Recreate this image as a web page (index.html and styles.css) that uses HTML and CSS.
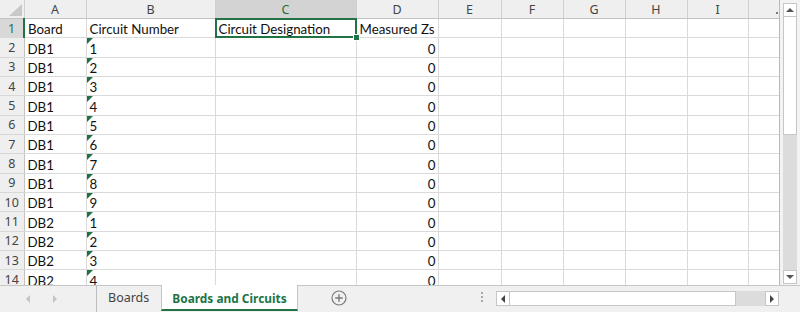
FILE: index.html
```html
<!DOCTYPE html>
<html lang="en">
<head>
  <meta charset="UTF-8">
  <title>Boards and Circuits</title>
  <link rel="stylesheet" href="styles.css">
</head>
<body>
  <div class="sheet">
    <div class="grid-wrap">
      <table class="grid">
        <colgroup>
          <col style="width:24px"><col style="width:62px"><col style="width:129px"><col style="width:141px">
          <col style="width:82px"><col style="width:63px"><col style="width:62px"><col style="width:62px">
          <col style="width:62px"><col style="width:61px"><col style="width:31px">
        </colgroup>
        <thead>
          <tr>
            <th class="corner"></th>
            <th>A</th><th>B</th><th class="col-sel">C</th><th>D</th><th>E</th>
            <th>F</th><th>G</th><th>H</th><th>I</th><th class="last"><span class="dot"></span></th>
          </tr>
        </thead>
        <tbody>
          <tr><th class="row-sel">1</th><td>Board</td><td>Circuit Number</td><td class="sel">Circuit Designation</td><td>Measured Zs</td><td></td><td></td><td></td><td></td><td></td><td></td></tr>
          <tr><th>2</th><td>DB1</td><td class="txt">1</td><td></td><td class="num">0</td><td></td><td></td><td></td><td></td><td></td><td></td></tr>
          <tr><th>3</th><td>DB1</td><td class="txt">2</td><td></td><td class="num">0</td><td></td><td></td><td></td><td></td><td></td><td></td></tr>
          <tr><th>4</th><td>DB1</td><td class="txt">3</td><td></td><td class="num">0</td><td></td><td></td><td></td><td></td><td></td><td></td></tr>
          <tr><th>5</th><td>DB1</td><td class="txt">4</td><td></td><td class="num">0</td><td></td><td></td><td></td><td></td><td></td><td></td></tr>
          <tr><th>6</th><td>DB1</td><td class="txt">5</td><td></td><td class="num">0</td><td></td><td></td><td></td><td></td><td></td><td></td></tr>
          <tr><th>7</th><td>DB1</td><td class="txt">6</td><td></td><td class="num">0</td><td></td><td></td><td></td><td></td><td></td><td></td></tr>
          <tr><th>8</th><td>DB1</td><td class="txt">7</td><td></td><td class="num">0</td><td></td><td></td><td></td><td></td><td></td><td></td></tr>
          <tr><th>9</th><td>DB1</td><td class="txt">8</td><td></td><td class="num">0</td><td></td><td></td><td></td><td></td><td></td><td></td></tr>
          <tr><th>10</th><td>DB1</td><td class="txt">9</td><td></td><td class="num">0</td><td></td><td></td><td></td><td></td><td></td><td></td></tr>
          <tr><th>11</th><td>DB2</td><td class="txt">1</td><td></td><td class="num">0</td><td></td><td></td><td></td><td></td><td></td><td></td></tr>
          <tr><th>12</th><td>DB2</td><td class="txt">2</td><td></td><td class="num">0</td><td></td><td></td><td></td><td></td><td></td><td></td></tr>
          <tr><th>13</th><td>DB2</td><td class="txt">3</td><td></td><td class="num">0</td><td></td><td></td><td></td><td></td><td></td><td></td></tr>
          <tr><th>14</th><td>DB2</td><td class="txt">4</td><td></td><td class="num">0</td><td></td><td></td><td></td><td></td><td></td><td></td></tr>
        </tbody>
      </table>
    </div>
    <div class="vscroll">
      <div class="sb-btn"><span class="arr up"></span></div>
      <div class="vthumb"></div>
      <div class="vtrack"></div>
      <div class="sb-btn"><span class="arr down"></span></div>
    </div>
  </div>

  <div class="tabbar">
    <div class="tab-nav">
      <span class="arr left light"></span>
      <span class="arr right light"></span>
    </div>
    <div class="tab">Boards</div>
    <div class="tab active">Boards and Circuits</div>
    <div class="add-sheet">
      <svg width="16" height="16" viewBox="0 0 16 16">
        <circle cx="8" cy="8" r="7" fill="none" stroke="#7a7a7a" stroke-width="1.2"/>
        <path d="M8 4.2v7.6M4.2 8h7.6" stroke="#7a7a7a" stroke-width="1.4"/>
      </svg>
    </div>
    <div class="grip"><i></i><i></i><i></i></div>
    <div class="hscroll">
      <div class="sb-btn"><span class="arr left"></span></div>
      <div class="hthumb"></div>
      <div class="htrack"></div>
      <div class="sb-btn"><span class="arr right"></span></div>
    </div>
  </div>
</body>
</html>
```

FILE: styles.css
```css
body {
  margin: 0;
  width: 800px;
  height: 312px;
  overflow: hidden;
  background: #f3f3f3;
  font-family: Lato, 'Liberation Sans', sans-serif;
}
.sheet {
  display: flex;
  height: 285px;
}
.grid-wrap {
  width: 779px;
  height: 285px;
  overflow: hidden;
  background: #fff;
  border-right: 1px solid #b9b9b9;
  box-sizing: content-box;
}
.grid {
  border-collapse: collapse;
  table-layout: fixed;
  width: 779px;
}
.grid thead th {
  height: 18px;
  background: #efefef;
  border-right: 1px solid #d0d0d0;
  border-bottom: 1px solid #c3c3c3;
  font-family: 'Noto Sans', sans-serif;
  font-weight: normal;
  font-size: 12.5px;
  color: #444;
  padding: 0;
  line-height: 17px;
}
.grid thead th.col-sel {
  background: #d3d3d3;
  color: #1f6e43;
}
.grid thead th.corner {
  position: relative;
}
.grid thead th.corner::after {
  content: '';
  position: absolute;
  right: 2px;
  bottom: 2px;
  border-left: 13px solid transparent;
  border-bottom: 12px solid #c8c8c8;
}
.grid thead th.last {
  position: relative;
  border-right: none;
}
.dot {
  position: absolute;
  right: 1px;
  bottom: 4px;
  width: 2px;
  height: 2px;
  background: #777;
}
.grid tbody tr {
  height: 19.33px;
}
.grid tbody th {
  background: #efefef;
  border-right: 1px solid #c3c3c3;
  border-bottom: 1px solid #d8d8d8;
  font-family: 'Noto Sans', sans-serif;
  font-weight: normal;
  font-size: 12.5px;
  color: #444;
  padding: 0;
  text-align: center;
}
.grid tbody th.row-sel {
  background: #d8d8d8;
  color: #1f6e43;
  border-right: 2px solid #217346;
}
.grid td {
  border-right: 1px solid #dadada;
  border-bottom: 1px solid #dadada;
  padding: 0 3px;
  font-size: 13.3px;
  color: #111;
  white-space: nowrap;
  overflow: hidden;
  line-height: 15px;
  vertical-align: bottom;
}
.grid td:last-child {
  border-right: none;
}
.grid td.num {
  text-align: right;
  padding-right: 2px;
}
.grid td.txt {
  position: relative;
}
.grid td.txt::before {
  content: '';
  position: absolute;
  top: 0;
  left: 0;
  border-top: 6px solid #1e7145;
  border-right: 6px solid transparent;
}
.grid td.sel {
  position: relative;
  overflow: visible;
}
.grid td.sel::after {
  content: '';
  position: absolute;
  top: -1px;
  left: -1px;
  right: -1px;
  bottom: -1px;
  border: 2px solid #217346;
}
.grid td.sel::before {
  content: '';
  position: absolute;
  right: -4px;
  bottom: -4px;
  width: 5px;
  height: 5px;
  background: #217346;
  border: 1px solid #fff;
  z-index: 2;
}

/* scrollbars */
.vscroll {
  width: 20px;
  display: flex;
  flex-direction: column;
  padding: 3px 3px 1px 3px;
  box-sizing: border-box;
  background: #f3f3f3;
}
.sb-btn {
  width: 14px;
  height: 14px;
  background: #fff;
  border: 1px solid #c6c6c6;
  box-sizing: border-box;
  display: flex;
  align-items: center;
  justify-content: center;
  flex-shrink: 0;
}
.vthumb {
  height: 118px;
  background: #fff;
  border: 1px solid #c6c6c6;
  border-top: none;
  box-sizing: border-box;
}
.vtrack {
  flex: 1;
  background: #dcdcdc;
}
.arr {
  width: 0;
  height: 0;
}
.arr.up {
  border-left: 4px solid transparent;
  border-right: 4px solid transparent;
  border-bottom: 4px solid #555;
}
.arr.down {
  border-left: 4px solid transparent;
  border-right: 4px solid transparent;
  border-top: 4px solid #555;
}
.arr.left {
  border-top: 4px solid transparent;
  border-bottom: 4px solid transparent;
  border-right: 4px solid #444;
}
.arr.right {
  border-top: 4px solid transparent;
  border-bottom: 4px solid transparent;
  border-left: 4px solid #444;
}
.arr.light.left {
  border-right-color: #c4c4c4;
}
.arr.light.right {
  border-left-color: #c4c4c4;
}

/* sheet tabs */
.tabbar {
  height: 27px;
  display: flex;
  align-items: flex-start;
  border-top: 1px solid #c6c6c6;
  box-sizing: border-box;
  background: #f0f0f0;
}
.tab-nav {
  width: 97px;
  height: 26px;
  display: flex;
  align-items: center;
  gap: 23px;
  padding-left: 26px;
  box-sizing: border-box;
  border-right: 1px solid #bdbdbd;
}
.tab {
  height: 25px;
  line-height: 24px;
  padding: 0 12px 0 11px;
  font-family: 'Noto Sans', sans-serif;
  font-size: 12.5px;
  color: #444;
}
.tab.active {
  margin-top: -1px;
  height: 26px;
  background: #fff;
  border-left: 1px solid #c6c6c6;
  border-right: 1px solid #c6c6c6;
  border-bottom: 2px solid #217346;
  box-sizing: border-box;
  font-weight: bold;
  font-size: 11.9px;
  color: #217346;
  padding: 1px 10px 0 10px;
}
.add-sheet {
  width: 16px;
  height: 16px;
  margin: 4px 0 0 33px;
}
.grip {
  display: flex;
  flex-direction: column;
  gap: 2px;
  margin: 6px 0 0 134px;
}
.grip i {
  width: 2px;
  height: 2px;
  background: #a8a8a8;
}
.hscroll {
  display: flex;
  margin: 5px 0 0 13px;
  height: 15px;
}
.hscroll .sb-btn {
  width: 14px;
  height: 15px;
}
.hthumb {
  width: 226px;
  background: #fff;
  border: 1px solid #c6c6c6;
  border-left: none;
  box-sizing: border-box;
}
.htrack {
  width: 29px;
  background: #dcdcdc;
}
```
